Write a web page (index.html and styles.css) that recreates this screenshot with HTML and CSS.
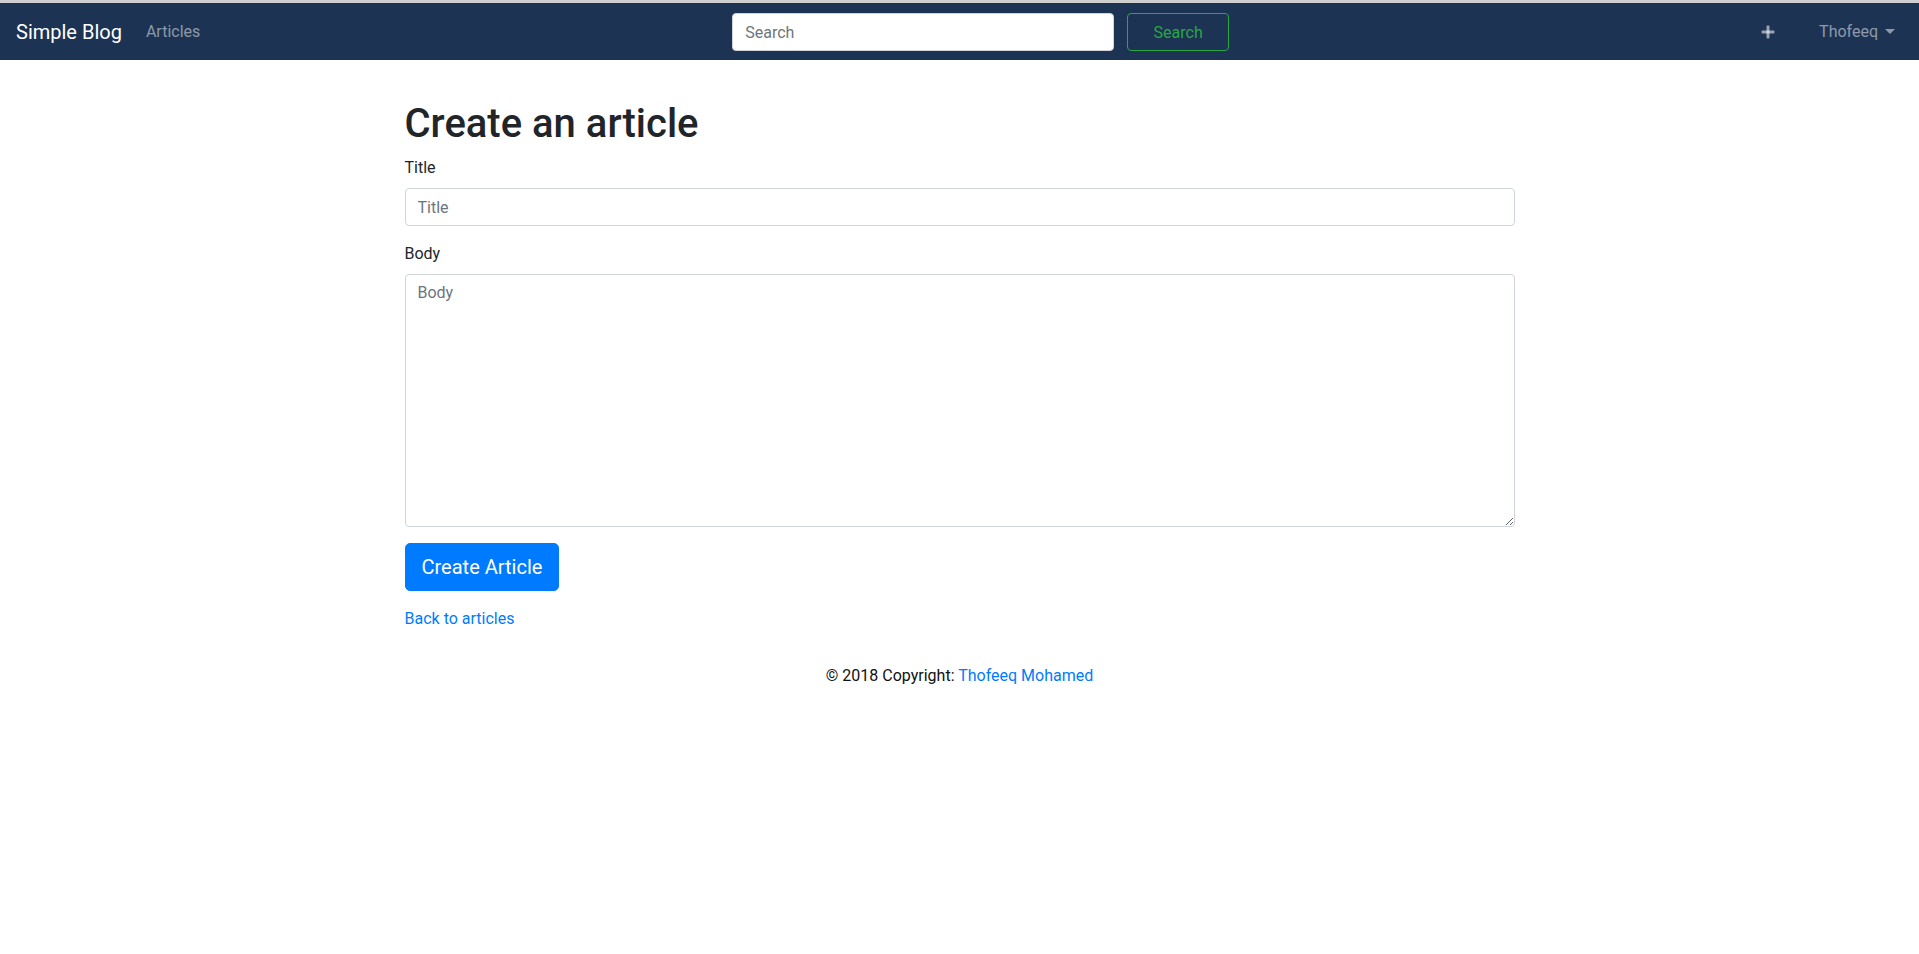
FILE: index.html
```html
<!DOCTYPE html>
<html lang="en">
<head>
<meta charset="utf-8">
<title>Simple Blog</title>
<link rel="stylesheet" href="styles.css">
</head>
<body>
<nav class="navbar">
  <div class="nav-left">
    <a class="brand" href="#">Simple Blog</a>
    <a class="nav-link" href="#">Articles</a>
  </div>
  <form class="search-form">
    <input class="search-input" type="text" placeholder="Search">
    <button class="btn-search" type="button">Search</button>
  </form>
  <div class="nav-right">
    <a class="nav-link plus-link" href="#" aria-label="New article">
      <svg width="14" height="14" viewBox="0 0 14 14"><rect x="5.5" y="0.5" width="3" height="13" rx="1"/><rect x="0.5" y="5.5" width="13" height="3" rx="1"/></svg>
    </a>
    <a class="nav-link dropdown-toggle" href="#">Thofeeq</a>
  </div>
</nav>
<main class="container">
  <h1 class="page-title">Create an article</h1>
  <form class="article-form">
    <div class="form-group">
      <label class="form-label" for="title">Title</label>
      <input class="form-control" id="title" type="text" placeholder="Title">
    </div>
    <div class="form-group">
      <label class="form-label" for="body">Body</label>
      <textarea class="form-control textarea" id="body" rows="10" placeholder="Body"></textarea>
    </div>
    <button class="btn-primary" type="button">Create Article</button>
  </form>
  <p class="back"><a href="#">Back to articles</a></p>
</main>
<footer class="footer">© 2018 Copyright: <a href="#">Thofeeq Mohamed</a></footer>
</body>
</html>
```

FILE: styles.css
```css
* { box-sizing: border-box; }
html, body { margin: 0; padding: 0; }
body {
  font-family: Roboto, "Liberation Sans", sans-serif;
  font-size: 16px;
  line-height: 1.5;
  color: #212529;
  background: #fff;
}
a { color: #007bff; text-decoration: none; }

.navbar {
  display: flex;
  align-items: center;
  height: 60px;
  border-top: 3px solid #cfcfcf;
  background: #1c3353;
  padding: 10px 16px 9px;
}
.nav-left, .nav-right { display: flex; align-items: center; }
.brand {
  color: #fff;
  font-size: 20px;
  line-height: 30px;
  padding: 5px 0;
  margin-right: 16px;
}
.nav-link {
  color: rgba(255,255,255,.5);
  padding: 8px;
  line-height: 24px;
  display: flex;
  align-items: center;
}
.plus-link { margin-right: 28px; height: 40px; }
.plus-link svg { fill: rgba(255,255,255,.55); }
.dropdown-toggle::after {
  content: "";
  display: inline-block;
  margin-left: 7px;
  border-top: 5px solid rgba(255,255,255,.5);
  border-left: 5px solid transparent;
  border-right: 5px solid transparent;
  position: relative;
  top: -1px;
}
.search-form {
  display: flex;
  gap: 13px;
  margin: 0 auto;
}
.search-input {
  width: 382px;
  height: 38px;
  border: 1px solid #ced4da;
  border-radius: 4px;
  padding: 6px 12px;
  font: 16px Roboto, sans-serif;
  color: #495057;
  background: #fff;
}
.search-input::placeholder { color: #6c757d; }
.btn-search {
  width: 102px;
  height: 38px;
  background: transparent;
  border: 1px solid #28a745;
  border-radius: 4px;
  color: #28a745;
  font: 16px Roboto, sans-serif;
}

.container {
  width: 1140px;
  margin: 0 auto;
  padding: 40px 15px 0;
}
.page-title {
  font-size: 40px;
  font-weight: 500;
  line-height: 1.2;
  margin: 0 0 8px;
}
.form-group { margin-bottom: 16px; }
.form-label { display: inline-block; margin-bottom: 8px; }
.form-control {
  display: block;
  width: 100%;
  height: 38px;
  padding: 6px 12px;
  font: 16px/1.5 Roboto, sans-serif;
  color: #495057;
  border: 1px solid #ced4da;
  border-radius: 4px;
  background: #fff;
}
.form-control::placeholder { color: #6c757d; }
.textarea { height: 253px; resize: vertical; }
.btn-primary {
  background: #007bff;
  border: 1px solid #007bff;
  color: #fff;
  font: 20px/1.5 Roboto, sans-serif;
  padding: 8px 16px;
  border-radius: 5px;
  height: 48px;
}
.back { margin: 16px 0 0; }
.footer {
  text-align: center;
  padding-top: 33px;
  color: #111;
}
```
